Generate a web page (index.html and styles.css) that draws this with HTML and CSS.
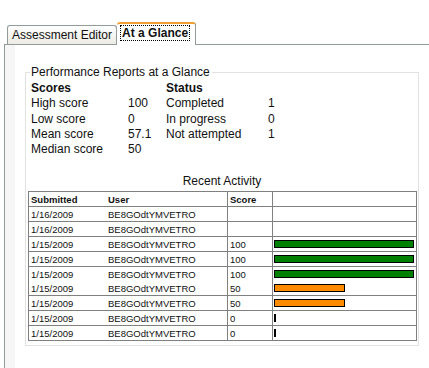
FILE: index.html
```html
<!DOCTYPE html>
<html lang="en">
<head>
  <meta charset="UTF-8" />
  <title>At a Glance</title>
  <link rel="stylesheet" href="styles.css">
</head>
<body>
  <div class="tabstrip">
    <div class="tab">Assessment Editor</div>
    <div class="tab active"><span class="focus">At a Glance</span></div>
  </div>

  <div class="panel">
    <fieldset class="glance">
      <legend>Performance Reports at a Glance</legend>

      <div class="summary">
        <div class="head">Scores</div><div></div>
        <div class="head">Status</div><div></div>

        <div>High score</div><div>100</div>
        <div>Completed</div><div>1</div>

        <div>Low score</div><div>0</div>
        <div>In progress</div><div>0</div>

        <div>Mean score</div><div>57.1</div>
        <div>Not attempted</div><div>1</div>

        <div>Median score</div><div>50</div>
        <div></div><div></div>
      </div>

      <div class="caption">Recent Activity</div>

      <table class="activity">
        <tr>
          <th class="c-date">Submitted</th>
          <th class="c-user">User</th>
          <th class="c-score">Score</th>
          <th class="c-bar"></th>
        </tr>
        <tr><td>1/16/2009</td><td>BE8GOdtYMVETRO</td><td></td><td></td></tr>
        <tr><td>1/16/2009</td><td>BE8GOdtYMVETRO</td><td></td><td></td></tr>
        <tr><td>1/15/2009</td><td>BE8GOdtYMVETRO</td><td>100</td><td class="bar-cell"><div class="bar high" style="width:140px"></div></td></tr>
        <tr><td>1/15/2009</td><td>BE8GOdtYMVETRO</td><td>100</td><td class="bar-cell"><div class="bar high" style="width:140px"></div></td></tr>
        <tr class="joined"><td>1/15/2009</td><td>BE8GOdtYMVETRO</td><td>100</td><td class="bar-cell"><div class="bar high" style="width:140px"></div></td></tr>
        <tr><td>1/15/2009</td><td>BE8GOdtYMVETRO</td><td>50</td><td class="bar-cell"><div class="bar mid" style="width:71px"></div></td></tr>
        <tr><td>1/15/2009</td><td>BE8GOdtYMVETRO</td><td>50</td><td class="bar-cell"><div class="bar mid" style="width:71px"></div></td></tr>
        <tr><td>1/15/2009</td><td>BE8GOdtYMVETRO</td><td>0</td><td class="bar-cell"><div class="bar low" style="width:2px"></div></td></tr>
        <tr><td>1/15/2009</td><td>BE8GOdtYMVETRO</td><td>0</td><td class="bar-cell"><div class="bar low" style="width:2px"></div></td></tr>
      </table>
    </fieldset>
  </div>
</body>
</html>
```

FILE: styles.css
```css
body {
  margin: 0;
  font-family: "Liberation Sans", Arial, sans-serif;
  font-size: 12px;
  color: #111;
  background: #fff;
  overflow: hidden;
}
.tabstrip {
  display: flex;
  align-items: flex-end;
  margin-left: 4px;
  padding: 22px 0 0 3px;
}
.tab {
  box-sizing: border-box;
  height: 19px;
  padding: 0 4px;
  line-height: 18px;
  border: 1px solid #919b9c;
  border-bottom: none;
  border-radius: 3px 3px 0 0;
  background: linear-gradient(#fefefe, #ecebe4);
  color: #111;
}
.tab.active {
  height: 23px;
  margin-bottom: -1px;
  padding: 0 6px 0 4px;
  border-top: 2px solid #f0a034;
  border-left: none;
  background: #fff;
  font-weight: bold;
  line-height: 19px;
  position: relative;
}
.focus {
  outline: 1px dotted #000;
  padding: 0 1px;
}
.panel {
  box-sizing: border-box;
  margin-left: 4px;
  height: 326px;
  border-left: 1px solid #919b9c;
  border-top: 1px solid #919b9c;
  padding: 20px 10px 0 20px;
  background: linear-gradient(to right, #f6f6f6 10px, #fff 10px);
}
.glance {
  margin: 0;
  padding: 0 1px 4px 1px;
  border: 1px solid #e2e2e2;
}
.glance legend {
  margin-left: 3px;
  padding: 0 2px 0 1px;
  font-size: 12px;
}
.summary {
  display: grid;
  grid-template-columns: 97px 38px 102px 30px;
  margin: 2px 0 0 4px;
  line-height: 15.3px;
}
.summary .head {
  font-weight: bold;
}
.caption {
  margin-top: 16px;
  text-align: center;
  line-height: 16px;
}
.activity {
  width: 389px;
  margin: 2px 0 0 1px;
  border-collapse: collapse;
  border: 1px solid #808080;
  font-size: 9.5px;
  table-layout: fixed;
}
.activity th, .activity td {
  height: 14px;
  padding: 0 0 0 2px;
  border-top: 1px solid #808080;
  border-left: 1px solid #808080;
  text-align: left;
  line-height: 13px;
  white-space: nowrap;
  overflow: hidden;
}
.activity td.bar-cell {
  padding-left: 1px;
}
.activity tr.joined + tr td {
  border-top: none;
}
.activity th:nth-child(2), .activity td:nth-child(2) {
  border-left: none;
}
.c-date { width: 75px; }
.c-user { width: 119px; }
.c-score { width: 42px; }
.activity th {
  font-weight: bold;
}
.bar {
  box-sizing: border-box;
  height: 8px;
  border: 1px solid #000;
}
.high { background: #008000; }
.mid { background: #ff8c00; }
.low { background: #000; }
```
